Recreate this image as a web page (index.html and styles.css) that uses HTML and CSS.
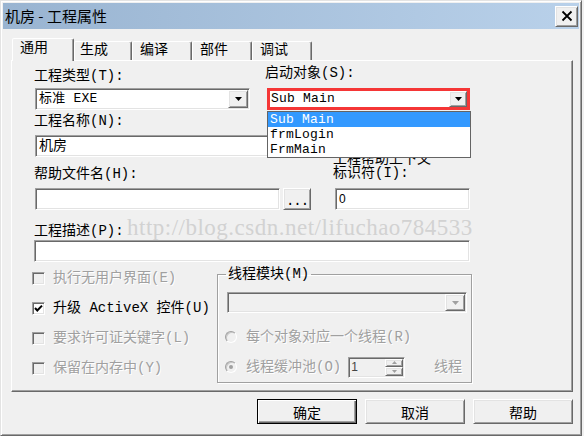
FILE: index.html
```html
<!DOCTYPE html>
<html lang="zh-CN">
<head>
<meta charset="utf-8">
<title>机房 - 工程属性</title>
<link rel="stylesheet" href="styles.css">
</head>
<body>
<div class="window">
  <div class="titlebar">
    <span class="title">机房 - 工程属性</span>
    <button class="close raised" aria-label="关闭"><svg width="12" height="12" viewBox="0 0 12 12"><path d="M1.5 1.5 L10.5 10.5 M10.5 1.5 L1.5 10.5" stroke="#000" stroke-width="1.8" fill="none"/></svg></button>
  </div>
  <div class="client">
    <div class="tabs">
      <div class="tab active">通用</div>
      <div class="tab t2">生成</div>
      <div class="tab">编译</div>
      <div class="tab">部件</div>
      <div class="tab">调试</div>
    </div>
    <div class="panel">
      <div class="row-top">
        <div class="field f-type">
          <div class="lbl">工程类型(T):</div>
          <div class="combo sunken w-type"><span class="combo-text">标准 EXE</span><span class="drop raised"><svg width="7" height="4" viewBox="0 0 7 4"><path d="M0 0H7L3.5 4Z" fill="#000"/></svg></span></div>
        </div>
        <div class="field f-start">
          <div class="lbl">启动对象(S):</div>
          <div class="combo-wrap">
            <div class="combo start"><span class="combo-text">Sub Main</span><span class="drop raised"><svg width="7" height="4" viewBox="0 0 7 4"><path d="M0 0H7L3.5 4Z" fill="#000"/></svg></span></div>
            <ul class="list">
              <li class="sel">Sub Main</li>
              <li>frmLogin</li>
              <li>FrmMain</li>
            </ul>
          </div>
        </div>
      </div>
      <div class="row-mid">
        <div class="col-left">
          <div class="lbl l-name">工程名称(N):</div>
          <div class="text sunken w-name">机房</div>
          <div class="lbl l-help">帮助文件名(H):</div>
          <div class="help-row"><div class="text sunken w-help"></div><button class="btn-dots raised">...</button></div>
        </div>
        <div class="col-right">
          <div class="lbl l-ctx">工程帮助上下文<br>标识符(I):</div>
          <div class="text sunken w-ctx"><span class="num">0</span></div>
        </div>
      </div>
      <div class="desc">
        <div class="lbl">工程描述(P):</div>
        <div class="text sunken w-desc"></div>
      </div>
      <div class="row-bottom">
        <div class="checks">
          <div class="check"><span class="box"></span><span class="gray">执行无用户界面(E)</span></div>
          <div class="check"><span class="box on"><svg width="11" height="11" viewBox="0 0 11 11"><path d="M2 5 L4.3 7.5 L9 2.6" stroke="#000" stroke-width="2" fill="none"/></svg></span><span>升级 ActiveX 控件(U)</span></div>
          <div class="check"><span class="box"></span><span class="gray">要求许可证关键字(L)</span></div>
          <div class="check"><span class="box"></span><span class="gray">保留在内存中(Y)</span></div>
        </div>
        <fieldset class="group">
          <legend>线程模块(M)</legend>
          <div class="combo sunken disabled w-thread"><span class="combo-text"></span><span class="drop raised"><svg width="7" height="4" viewBox="0 0 7 4"><path d="M0 0H7L3.5 4Z" fill="#a0a0a0"/></svg></span></div>
          <div class="radio-row r1"><span class="radio"></span><span class="gray">每个对象对应一个线程(R)</span></div>
          <div class="radio-row r2"><span class="radio on"></span><span class="gray">线程缓冲池(O)</span>
            <div class="spin sunken"><span class="spin-text">1</span><span class="spin-btns"><span class="sb raised"><svg width="5" height="3" viewBox="0 0 5 3"><path d="M0 3H5L2.5 0Z" fill="#a0a0a0"/></svg></span><span class="sb raised"><svg width="5" height="3" viewBox="0 0 5 3"><path d="M0 0H5L2.5 3Z" fill="#a0a0a0"/></svg></span></span></div>
            <span class="gray unit">线程</span>
          </div>
        </fieldset>
      </div>
      <div class="watermark">http://blog.csdn.net/lifuchao784533</div>
    </div>
    <div class="footer">
      <button class="btn default">确定</button>
      <button class="btn raised">取消</button>
      <button class="btn raised">帮助</button>
    </div>
  </div>
</div>
</body>
</html>
```

FILE: styles.css
```css
* { box-sizing: border-box; margin: 0; padding: 0; }
html, body { width: 584px; height: 436px; }
body {
  overflow: hidden;
  background: #f0f0f0;
  font-family: "Liberation Mono", "Noto Sans CJK SC", monospace;
  font-size: 14px;
  line-height: 16px;
  color: #000;
}
button { font: inherit; color: inherit; cursor: default; }
ul { list-style: none; }

.raised {
  background: #f0f0f0;
  border: 1px solid;
  border-color: #fff #696969 #696969 #fff;
  box-shadow: inset 1px 1px #e3e3e3, inset -1px -1px #a0a0a0;
}
.sunken {
  background: #fff;
  border: 1px solid;
  border-color: #a0a0a0 #fff #fff #a0a0a0;
  box-shadow: inset 1px 1px #696969, inset -1px -1px #e3e3e3;
  padding: 1px;
}

.window {
  width: 582px;
  height: 436px;
  border: 1px solid;
  border-color: #e3e3e3 #696969 #696969 #e3e3e3;
  box-shadow: inset 1px 1px #fff, inset -1px -1px #a0a0a0;
  padding: 2px;
  background: #f0f0f0;
}
.titlebar {
  height: 26px;
  display: flex;
  align-items: center;
  padding-left: 2px;
  background: linear-gradient(to right, #99b4d1, #b9d1ea);
}
.title {
  font-family: "Noto Sans CJK SC", sans-serif;
  font-size: 15px;
  line-height: 26px;
}
.close {
  margin-left: auto;
  margin-right: 1px;
  width: 23px;
  height: 21px;
  display: flex;
  align-items: center;
  justify-content: center;
}

.client { padding: 9px 0 0 8px; }

.tabs {
  display: flex;
  align-items: flex-end;
  height: 23px;
  margin-bottom: -1px;
  padding-left: 1px;
  position: relative;
  z-index: 2;
}
.tab {
  width: 60px;
  height: 19px;
  margin-bottom: 1px;
  padding: 0 0 0 7px;
  background: #f0f0f0;
  border: 1px solid;
  border-bottom: none;
  border-color: #fff #696969 transparent #fff;
  border-radius: 2px 2px 0 0;
  box-shadow: inset -1px 0 #a0a0a0;
}
.tab.t2 { width: 58px; padding-left: 5px; }
.tab.active {
  width: 62px;
  height: 23px;
  margin-bottom: 0;
  padding-top: 1px;
}

.panel {
  position: relative;
  width: 562px;
  height: 332px;
  border: 1px solid;
  border-color: #fff #696969 #696969 #fff;
  box-shadow: inset -1px -1px #a0a0a0;
  padding: 4px 0 0 22px;
}

.lbl { line-height: 16px; white-space: nowrap; }

.row-top { display: flex; align-items: flex-end; }
.f-type { width: 216px; }
.f-type .lbl { margin-bottom: 4px; }
.f-start { margin-left: 15px; }
.f-start .lbl { margin-bottom: 7px; }

.combo {
  height: 22px;
  display: flex;
  align-items: center;
}
.combo-text {
  flex: 1;
  padding-left: 2px;
  font-size: 13px;
  letter-spacing: 0.2px;
  line-height: 16px;
  white-space: pre;
}
.drop {
  width: 20px;
  height: 18px;
  display: flex;
  align-items: center;
  justify-content: center;
}
.w-type { width: 215px; margin-left: 1px; }

.combo-wrap { position: relative; width: 203px; margin-left: 2px; }
.combo.start {
  background: #fff;
  border: 3px solid #f53636;
  padding: 0;
}
.combo.start .combo-text { padding-left: 1px; }
.combo.start .drop { width: 18px; height: 16px; }
.list {
  position: absolute;
  top: 23px;
  left: 0;
  width: 204px;
  background: #fff;
  border: 1px solid #646464;
  z-index: 3;
}
.list li {
  height: 15px;
  line-height: 15px;
  padding-left: 2px;
  font-size: 13px;
  letter-spacing: 0.2px;
}
.list li.sel { background: #3399ff; color: #fff; }

.text { height: 22px; line-height: 18px; padding-left: 3px; }
.row-mid {
  display: grid;
  grid-template-columns: 277px 138px;
  column-gap: 22px;
}
.l-name { margin-top: 3px; }
.w-name { margin-top: 6px; margin-left: 1px; width: 265px; }
.l-help { margin-top: 9px; }
.help-row { display: flex; margin-top: 6px; margin-left: 1px; }
.w-help { width: 245px; }
.btn-dots {
  width: 28px;
  height: 22px;
  margin-left: 3px;
  line-height: 14px;
  padding-top: 4px;
  letter-spacing: -1px;
}
.col-right { display: flex; flex-direction: column; justify-content: flex-end; }
.l-ctx { line-height: 14px; margin-bottom: 8px; }
.w-ctx { width: 135px; margin-left: 2px; }
.num { font-family: "Liberation Sans", sans-serif; font-size: 12px; }

.desc { margin-top: 13px; }
.desc .lbl { margin-bottom: 1px; }
.w-desc { width: 436px; }

.watermark {
  position: absolute;
  left: 115px;
  top: 155px;
  font-family: "Liberation Serif", serif;
  font-size: 23px;
  line-height: 23px;
  letter-spacing: 0.5px;
  color: #d2d2d2;
  white-space: nowrap;
  pointer-events: none;
}

.row-bottom { display: flex; align-items: flex-start; }
.checks { flex: 0 0 185px; margin-left: -2px; padding-top: 1px; }
.check { height: 30px; display: flex; align-items: center; white-space: nowrap; }
.box {
  width: 13px;
  height: 13px;
  flex: none;
  margin-right: 8px;
  background: #f0f0f0;
  border: 1px solid;
  border-color: #a0a0a0 #fff #fff #a0a0a0;
  box-shadow: inset 1px 1px #696969, inset -1px -1px #e3e3e3;
}
.box.on { background: #fff; }
.box svg { display: block; }
.gray { color: #a0a0a0; text-shadow: 1px 1px #fff; }

.group {
  width: 255px;
  margin-top: 4px;
  border: 1px solid #a0a0a0;
  box-shadow: inset 1px 1px #fff, 1px 1px #fff;
  padding: 0 9px 5px 9px;
  min-width: 0;
}
.group legend { padding: 0 2px; margin-left: -1px; line-height: 16px; }
.w-thread { width: 240px; height: 21px; margin-top: 10px; background: #f0f0f0; }
.w-thread .drop { height: 17px; }

.radio-row { display: flex; align-items: center; height: 20px; white-space: nowrap; }
.r1 { margin-top: 14px; }
.r2 { margin-top: 10px; }
.radio {
  width: 12px;
  height: 12px;
  flex: none;
  margin-left: -2px;
  margin-right: 9px;
  border-radius: 50%;
  background: #f0f0f0;
  border: 1px solid;
  border-color: #a0a0a0 #fff #fff #a0a0a0;
  box-shadow: inset 1px 1px #c8c8c8;
  position: relative;
}
.radio.on::after {
  content: "";
  position: absolute;
  left: 3px;
  top: 3px;
  width: 4px;
  height: 4px;
  border-radius: 50%;
  background: #a0a0a0;
}
.spin {
  display: flex;
  width: 59px;
  height: 21px;
  margin-left: 7px;
  background: #f0f0f0;
}
.spin-text {
  flex: 1;
  font-family: "Liberation Sans", sans-serif;
  font-size: 12px;
  line-height: 17px;
  padding-left: 1px;
  color: #444;
}
.spin-btns { width: 18px; display: flex; flex-direction: column; }
.sb { flex: 1; display: flex; align-items: center; justify-content: center; }
.unit { margin-left: 29px; }

.footer {
  width: 562px;
  margin-top: 7px;
  display: flex;
  justify-content: flex-end;
  gap: 8px;
}
.btn {
  width: 100px;
  height: 25px;
  font-family: "Noto Sans CJK SC", sans-serif;
  font-size: 14px;
  line-height: 20px;
}
.btn.default {
  background: #f0f0f0;
  border: 1px solid #000;
  box-shadow: inset 1px 1px #fff, inset -1px -1px #696969, inset -2px -2px #a0a0a0;
}
```
